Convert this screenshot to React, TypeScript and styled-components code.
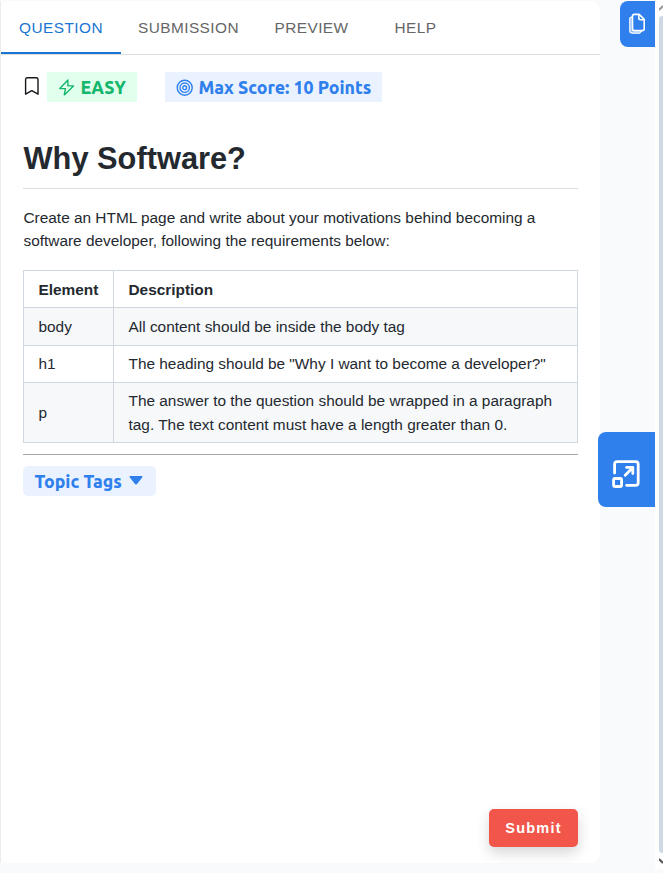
import React from "react";
import styled, { createGlobalStyle } from "styled-components";

const GlobalStyle = createGlobalStyle`
  *, *::before, *::after { box-sizing: border-box; }
  html, body { margin: 0; height: 100%; overflow: hidden; }
  body {
    background: #f8fafc;
    color: #24292f;
    font-family: "Liberation Sans", Arial, sans-serif;
    font-size: 15.4px;
    line-height: 1.5;
  }
  button { font: inherit; border: 0; padding: 0; cursor: pointer; }
  svg { display: block; flex: none; }
`;

const Page = styled.div`
  display: flex;
  width: 663px;
  height: 873px;
  overflow: hidden;
`;

const Panel = styled.main`
  display: flex;
  flex-direction: column;
  width: 600px;
  height: 862px;
  margin-top: 1px;
  background: #fff;
  border-left: 1px solid #ececee;
  border-radius: 0 10px 10px 0;
`;

const TabBar = styled.nav`
  display: flex;
  height: 54px;
  border-bottom: 1px solid #dedede;
`;

const Tab = styled.button<{ $width: number; $active?: boolean }>`
  width: ${(p) => p.$width}px;
  height: 53px;
  padding: 2px 0 0;
  background: none;
  color: ${(p) => (p.$active ? "#1976d2" : "#666")};
  border-bottom: 2px solid ${(p) => (p.$active ? "#1976d2" : "transparent")};
  letter-spacing: 0.44px;
`;

const Body = styled.section`
  display: flex;
  flex: 1;
  flex-direction: column;
  padding: 17px 22px 16px;
`;

const Badges = styled.div`
  display: flex;
  align-items: center;
  height: 30px;
`;

const Badge = styled.span<{ $tone: "green" | "blue"; $width: number }>`
  display: flex;
  align-items: center;
  gap: 4.5px;
  width: ${(p) => p.$width}px;
  height: 30px;
  padding-left: 11px;
  white-space: nowrap;
  font: 780 17.65px/30px Ubuntu, "Noto Sans", sans-serif;
  color: ${(p) => (p.$tone === "green" ? "#15b76c" : "#2f80ed")};
  background: ${(p) => (p.$tone === "green" ? "#e1ffed" : "#eaf2ff")};
`;

const BadgeLabel = styled.span`
  padding-top: 2px;
`;

const BookmarkButton = styled.button`
  width: 24px;
  height: 30px;
  padding: 0 0 2px 1px;
  background: none;
`;

const BadgeGap = styled.span`
  width: 28px;
`;

const Title = styled.h1`
  height: 48px;
  margin: 39px 0 17px;
  padding-top: 1px;
  border-bottom: 1px solid #d8dee4;
  font-size: 30.8px;
  line-height: 34px;
  font-weight: 700;
  text-indent: 0.5px;
`;

const Intro = styled.p`
  margin: 0 0 17px;
  padding-left: 0.5px;
  line-height: 23.25px;
`;

const Requirements = styled.table`
  width: 555px;
  border-collapse: collapse;
  table-layout: fixed;
`;

const Row = styled.tr<{ $height: number; $shaded?: boolean }>`
  height: ${(p) => p.$height}px;
  background: ${(p) => (p.$shaded ? "#f6f8fa" : "#fff")};
`;

const Cell = styled.td<{ $drop?: number }>`
  padding: ${(p) => p.$drop ?? 0}px 14.5px 0;
  border: 1px solid #d0d7de;
  line-height: 24px;
  text-align: left;
`;

const Divider = styled.hr`
  width: 100%;
  height: 1px;
  margin: 11px 0;
  border: 0;
  background: #a6a6a6;
`;

const TopicButton = styled.button`
  display: flex;
  align-items: center;
  gap: 7px;
  width: 133px;
  height: 30px;
  padding-left: 11.5px;
  border-radius: 5px;
  background: #eaf2ff;
  color: #2f80ed;
  white-space: nowrap;
  font: 780 17.65px/30px Ubuntu, "Noto Sans", sans-serif;
`;

const SubmitButton = styled.button`
  align-self: flex-end;
  width: 89px;
  height: 38px;
  margin-top: auto;
  padding-top: 1px;
  border-radius: 5px;
  background: #f2564b;
  color: #fff;
  font-size: 14.5px;
  font-weight: 700;
  letter-spacing: 1.2px;
  box-shadow: 0 6px 14px rgba(0, 0, 0, 0.16);
`;

const Rail = styled.aside`
  display: flex;
  flex-direction: column;
  align-items: flex-end;
  width: 55px;
  padding-top: 1px;
`;

const RailButton = styled.button<{ $width: number; $height: number; $top: number }>`
  display: flex;
  align-items: center;
  justify-content: center;
  flex: none;
  width: ${(p) => p.$width}px;
  height: ${(p) => p.$height}px;
  margin-top: ${(p) => p.$top}px;
  border-radius: 8px 0 0 8px;
  background: #2f80ed;
  color: #fff;
  z-index: 1;
`;

const CopyIcon = styled.svg`
  margin-right: 2px;
`;

const ExpandIcon = styled.svg`
  margin: 9px 2px 0 0;
`;

const Scrollbar = styled.div`
  display: flex;
  flex-direction: column;
  width: 8px;
  height: 869px;
  padding-left: 4px;
  background: #fff;
`;

const ScrollThumb = styled.div`
  height: 837px;
  border-radius: 3px 0 0 3px;
  background: #cfd9e3;
`;

const ArrowSlot = styled.div`
  height: 16px;
  padding-top: 5px;
`;

const tabs = [
  { label: "QUESTION", width: 120, active: true },
  { label: "SUBMISSION", width: 135 },
  { label: "PREVIEW", width: 111 },
  { label: "HELP", width: 97 },
];

const rows = [
  { element: "body", description: "All content should be inside the body tag", height: 38, drop: 2, shaded: true },
  { element: "h1", description: 'The heading should be "Why I want to become a developer?"', height: 37 },
  {
    element: "p",
    description:
      "The answer to the question should be wrapped in a paragraph tag. The text content must have a length greater than 0.",
    height: 60,
    drop: 2,
    shaded: true,
  },
];

export default function App() {
  return (
    <>
      <GlobalStyle />
      <Page>
        <Panel>
          <TabBar>
            {tabs.map((t) => (
              <Tab key={t.label} $width={t.width} $active={t.active}>
                {t.label}
              </Tab>
            ))}
          </TabBar>
          <Body>
            <Badges>
              <BookmarkButton aria-label="Bookmark">
                <svg width="16" height="20" viewBox="0 0 16 20" fill="none" stroke="#16181b" strokeWidth="1.4" strokeLinejoin="round">
                  <path d="M3.2 1.7h9.1a1.7 1.7 0 0 1 1.7 1.7v14.8l-6.2-3.5-6.2 3.5V3.4a1.7 1.7 0 0 1 1.6-1.7z" />
                </svg>
              </BookmarkButton>
              <Badge $tone="green" $width={90}>
                <svg width="18" height="18" viewBox="0 0 18 18" fill="none" stroke="currentColor" strokeWidth="1.4" strokeLinejoin="round">
                  <path d="M9.9 1.9 1.8 10.6h5.6l-1.1 6.3 9.2-9H9.9z" />
                </svg>
                <BadgeLabel>EASY</BadgeLabel>
              </Badge>
              <BadgeGap />
              <Badge $tone="blue" $width={217}>
                <svg width="18" height="18" viewBox="0 0 18 18" fill="none" stroke="currentColor" strokeWidth="1.4">
                  <circle cx="8.7" cy="9.7" r="7.5" />
                  <circle cx="8.7" cy="9.7" r="4.7" />
                  <circle cx="8.7" cy="9.7" r="1.9" />
                </svg>
                <BadgeLabel>Max Score: 10 Points</BadgeLabel>
              </Badge>
            </Badges>
            <Title>Why Software?</Title>
            <Intro>
              Create an HTML page and write about your motivations behind becoming a software developer, following the
              requirements below:
            </Intro>
            <Requirements>
              <colgroup>
                <col width="90" />
                <col />
              </colgroup>
              <thead>
                <Row $height={37}>
                  <Cell as="th" $drop={2}>Element</Cell>
                  <Cell as="th" $drop={2}>Description</Cell>
                </Row>
              </thead>
              <tbody>
                {rows.map((r) => (
                  <Row key={r.element} $height={r.height} $shaded={r.shaded}>
                    <Cell $drop={r.drop}>{r.element}</Cell>
                    <Cell $drop={r.drop}>{r.description}</Cell>
                  </Row>
                ))}
              </tbody>
            </Requirements>
            <Divider />
            <TopicButton>
              <BadgeLabel>Topic Tags</BadgeLabel>
              <svg width="14" height="10" viewBox="0 0 14 10" fill="currentColor">
                <path d="M1.2 0h11.6q1.2.3.4 1.5L8 8.1q-1 1-2 0L.8 1.5Q0 .3 1.2 0z" />
              </svg>
            </TopicButton>
            <SubmitButton>Submit</SubmitButton>
          </Body>
        </Panel>
        <Rail>
          <RailButton $width={35} $height={46} $top={0} aria-label="Copy">
            <CopyIcon width="18" height="22" viewBox="0 0 18 22" fill="none" stroke="currentColor" strokeWidth="1.6" strokeLinejoin="round">
              <path d="M4.5 3.6 1.8 5.1v12.4q0 2.7 2.7 2.7h7.2l2.2-2.5" fill="#8cbaf5" strokeWidth="1.2" />
              <path d="M6.2 1.4h5l5 5v9.3q0 1.9-1.9 1.9H6.4q-1.9 0-1.9-1.9V3.1q0-1.7 1.7-1.7z" fill="#2f80ed" />
              <path d="M10.8 1.4v3.7q0 1.7 1.7 1.7h3.7" />
            </CopyIcon>
          </RailButton>
          <RailButton $width={57} $height={75} $top={385} aria-label="Maximize">
            <ExpandIcon width="28" height="28" viewBox="0 0 28 28" fill="none" stroke="currentColor" strokeWidth="2.8" strokeLinecap="round" strokeLinejoin="round">
              <rect x="1.6" y="18.5" width="8" height="8" rx="1.5" />
              <path d="M2.6 13V4.2Q2.6 1.6 5.2 1.6h18.4Q26.2 1.6 26.2 4.2V22.7q0 2.6-2.6 2.6h-9" />
              <path d="M14.6 7.4h6.2v6.2M20.8 7.4l-7.6 7.8" />
            </ExpandIcon>
          </RailButton>
        </Rail>
        <Scrollbar>
          <ArrowSlot>
            <svg width="4" height="6" viewBox="0 0 4 6" fill="none" stroke="#999" strokeWidth="2">
              <path d="M0 5 4 1" />
            </svg>
          </ArrowSlot>
          <ScrollThumb />
          <ArrowSlot>
            <svg width="4" height="6" viewBox="0 0 4 6" fill="none" stroke="#555" strokeWidth="2">
              <path d="M0 1 4 5" />
            </svg>
          </ArrowSlot>
        </Scrollbar>
      </Page>
    </>
  );
}
